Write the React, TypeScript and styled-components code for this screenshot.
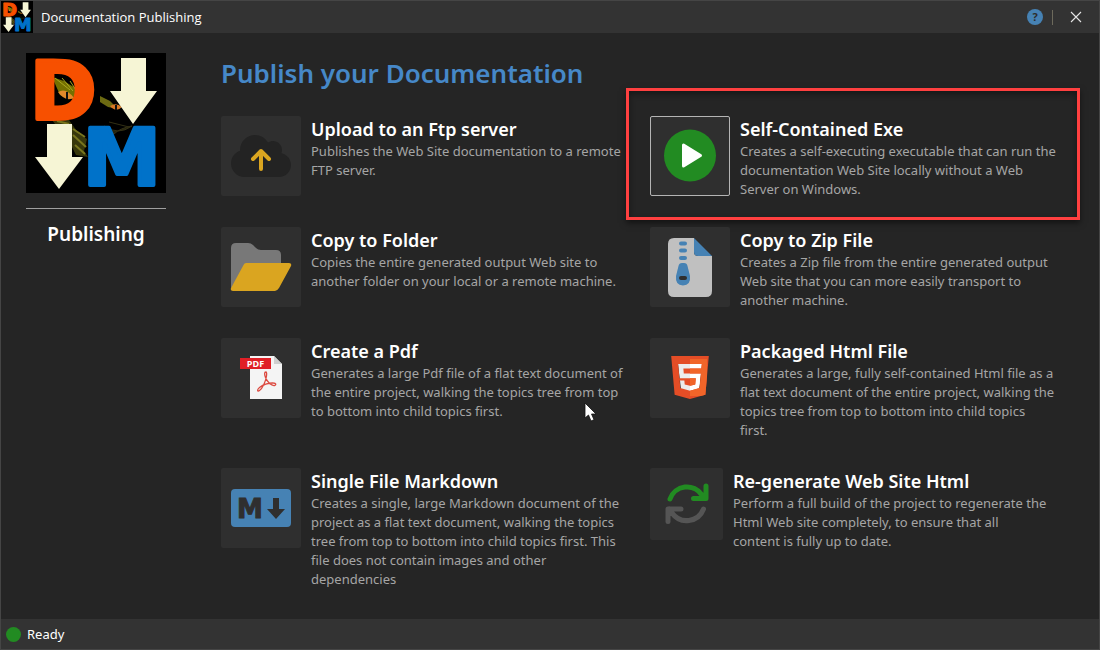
import React from "react";
import styled, { createGlobalStyle, css } from "styled-components";
import { SiHtml5 } from "react-icons/si";

const GlobalStyle = createGlobalStyle`
  * { box-sizing: border-box; }
  body {
    margin: 0;
    background: #252525;
    color: #fff;
    font-family: "Noto Sans", "Open Sans", sans-serif;
    font-size: 13px;
    line-height: 19px;
  }
`;

const Window = styled.div`
  display: flex;
  flex-direction: column;
  min-height: 100vh;
  border: 1px solid #454545;
  background: #252525;
`;

const TitleBar = styled.header`
  display: flex;
  align-items: center;
  height: 32px;
  padding-right: 17px;
  background: #333;
`;

const WindowTitle = styled.span`
  flex: 1;
  padding-left: 8px;
  font-family: "Open Sans", sans-serif;
`;

const BarButton = styled.button`
  display: flex;
  padding: 0;
  border: 0;
  background: none;
  color: #e6e6e6;
`;

const BarDivider = styled.span`
  width: 1px;
  height: 15px;
  margin: 0 17px 0 9px;
  background: #6d6a5c;
`;

const Body = styled.div`
  display: flex;
  flex: 1;
  gap: 55px;
  padding: 20px 36px 24px 25px;
`;

const Sidebar = styled.aside`
  flex: none;
  width: 140px;
`;

const SidebarTitle = styled.h2`
  margin: 15px 0 0;
  padding-top: 12px;
  border-top: 1px solid #a0a0a0;
  font-size: 19px;
  font-weight: 600;
  line-height: 26px;
  text-align: center;
`;

const Main = styled.main`
  flex: 1;
  min-width: 0;
`;

const PageTitle = styled.h1`
  margin: 0 0 23px;
  color: #4688c8;
  font-size: 26px;
  font-weight: 600;
  line-height: 40px;
`;

const Options = styled.div`
  display: grid;
  grid-template-columns: repeat(2, minmax(0, 1fr));
  gap: 28px 16px;
`;

const Card = styled.section<{ $highlighted?: boolean }>`
  position: relative;
  display: flex;
  align-items: flex-start;
  gap: 10px;
  ${(p) =>
    p.$highlighted &&
    css`
      &::after {
        content: "";
        position: absolute;
        inset: -28px -17px -21px -24px;
        border: 3px solid #ff4040;
        box-shadow: 0 3px 6px rgba(0, 0, 0, 0.5), inset 0 3px 6px rgba(0, 0, 0, 0.4);
        pointer-events: none;
      }
    `}
`;

const Tile = styled.button<{ $small?: boolean; $selected?: boolean }>`
  display: flex;
  flex: none;
  align-items: center;
  justify-content: center;
  width: ${(p) => (p.$small ? 73 : 80)}px;
  height: ${(p) => (p.$small ? 72 : 80)}px;
  padding: 0;
  border: 0;
  border-radius: 2px;
  outline: ${(p) => (p.$selected ? "1px solid #b4b4b4" : "none")};
  outline-offset: -1px;
  background: #2f2f2f;
`;

const CardTitle = styled.h3`
  margin: 0;
  font-size: 18px;
  font-weight: 600;
  line-height: 26px;
`;

const CardText = styled.p`
  margin: 0;
  color: #a5a5a5;
  white-space: pre-line;
`;

const Pointer = styled.svg`
  position: absolute;
  top: 64px;
  left: 363px;
`;

const StatusBar = styled.footer`
  display: flex;
  align-items: center;
  gap: 6px;
  height: 30px;
  padding-left: 5px;
  background: #333;
`;

const StatusDot = styled.span`
  width: 15px;
  height: 15px;
  border-radius: 50%;
  background: #228b22;
`;

const Logo = ({ size }: { size: number }) => (
  <svg width={size} height={size} viewBox="0 0 140 140" display="block" overflow="visible" aria-hidden="true">
    <rect width="140" height="140" fill="#000" />
    <path d="M26 24l12 4 8 5 10 5 8 12-6-2 3 9-9-8-8-4-10-3z" fill="#747000" />
    <path d="M29 25l15 12M36 25l11 13M44 28l8 12M51 31l7 15" stroke="#aaa820" strokeWidth="1" />
    <path d="M32 39q8-5 16 6q-9 4-16-6z" fill="#e2892b" />
    <path d="M41 39v7" stroke="#111" strokeWidth="2" />
    <path d="M74 43l10 5 8 8-10-2-8-5z" fill="#6c6a12" />
    <path d="M84 53q6-4 12 1q-6 6-12-1z" fill="#d87725" />
    <path d="M90 52v5" stroke="#111" strokeWidth="2" />
    <path d="M78 73q14 10 28 0q-12 2-18 8zM83 69l20 5" fill="#26250e" stroke="#333015" />
    <path d="M26 67h17l10 14 8 5-3 12 4 6-12-2-5-10z" fill="#37370b" />
    <path d="M31 68l12 3M47 76l12 8M47 82l13 12M49 92l10 9" stroke="#77751d" strokeWidth="2" />
    <g fontFamily="DejaVu Sans, sans-serif" fontWeight="700" strokeLinejoin="round" strokeWidth="4">
      <text x="4" y="66" fontSize="80" fill="#f75000" stroke="#f75000">D</text>
      <text x="57" y="132" fontSize="78" fill="#0072c9" stroke="#0072c9">M</text>
    </g>
    <path d="M95 5h25v33h11l-24 33-23-33h11z" fill="#f6f5d5" />
    <path d="M21 71h25v33h11l-24 32-24-32h12z" fill="#f6f5d5" />
  </svg>
);

const HelpIcon = () => (
  <svg width="16" height="16" viewBox="0 0 16 16" overflow="visible" aria-hidden="true">
    <circle cx="8" cy="8" r="8" fill="#4682b4" />
    <text x="8" y="12" textAnchor="middle" fontFamily="Open Sans, sans-serif" fontWeight="700" fontSize="11" fill="#2d2d2d">?</text>
  </svg>
);

const CloseIcon = () => (
  <svg width="12" height="12" viewBox="0 0 12 12" aria-hidden="true">
    <path d="M1 1l10 10M11 1L1 11" stroke="currentColor" strokeWidth="1.1" />
  </svg>
);

const Art = ({ children }: { children: React.ReactNode }) => (
  <svg width="80" height="80" viewBox="0 0 80 80" fill="none" aria-hidden="true">
    {children}
  </svg>
);

const CloudArt = () => (
  <Art>
    <path
      transform="translate(10 16) scale(.09375)"
      fill="#232323"
      d="M537.6 226.6c4.1-10.7 6.4-22.4 6.4-34.6 0-53-43-96-96-96-19.7 0-38.1 6-53.3 16.2C367 64.2 315.3 32 256 32c-88.4 0-160 71.6-160 160 0 2.7.1 5.4.2 8.1C40.2 219.8 0 273.2 0 336c0 79.5 64.5 144 144 144h368c70.7 0 128-57.3 128-128 0-61.9-44-113.6-102.4-125.4z"
    />
    <path d="M40 53V35M32 43l8-8 8 8" stroke="#daa520" strokeWidth="4" strokeLinecap="round" strokeLinejoin="round" />
  </Art>
);

const PlayArt = () => (
  <Art>
    <circle cx="40" cy="39.5" r="26" fill="#228b22" />
    <path d="M33.5 29v21l17-10.500z" fill="#fff" stroke="#fff" strokeWidth="3" strokeLinejoin="round" />
  </Art>
);

const FolderArt = () => (
  <Art>
    <path d="M10 62V21q0-5 5-5h12q3 0 5 2l3 3q2 2 5 2h15q5 0 5 5v9H24z" fill="#787878" />
    <path d="M25 36h43q3 0 2 3L58 61q-2 3-4 3H12q-3 0-2-3l12-22q1-3 3-3z" fill="#daa520" />
  </Art>
);

const ZipArt = () => (
  <Art>
    <path d="M24 11h20v14q0 4 4 4h14v35q0 6-6 6H24q-6 0-6-6V17q0-6 6-6z" fill="#c0c0c0" />
    <path d="M44 11l18 18H48q-4 0-4-4z" fill="#4682b4" />
    <path d="M31 16.500h4M31 23.500h4M31 31h4" stroke="#4682b4" strokeWidth="4" strokeLinecap="round" />
    <path d="M32 36h2q3 0 3.500 3l2.500 10q1 9-7 9.500-8-.5-7-9.500l2.500-10q.5-3 3.500-3z" fill="#4682b4" />
    <path d="M31 51h4" stroke="#2f2f2f" strokeWidth="4" strokeLinecap="round" />
  </Art>
);

const PdfArt = () => (
  <Art>
    <path d="M29 18h24l8 8v35H29z" fill="#f4f4f4" />
    <path d="M53 18v8h8z" fill="#cfcfcf" />
    <path d="M19 20h31v11H19z" fill="#e01f26" />
    <text x="34.500" y="29" textAnchor="middle" fontFamily="Open Sans, sans-serif" fontWeight="700" fontSize="9" fill="#fff">PDF</text>
    <path
      d="M45 34c-2 0-1.500 3-.5 5.500 2 5 6 8.500 9 8 2-.5 1.500-2.500-1-2.500-5-.2-10 1.500-14 4.500-3 2.500-2 4.500 0 3 3-2 6.500-10 7-14.500.2-2 .3-4-.5-4z"
      stroke="#dc4a40"
      strokeWidth="1.300"
    />
  </Art>
);

const HtmlArt = () => (
  <Art>
    <path d="M28 26h24l-3 25-9 3-9-3z" fill="#ececec" />
    <path d="M40 26h12l-3 25-9 3z" fill="#fff" />
    <SiHtml5 x="18.500" y="18" size={43} color="#e44d26" />
    <svg x="40" y="21" width="17" height="37" viewBox="40 21 17 37">
      <SiHtml5 x="18.500" y="18" size={43} color="#f16529" />
    </svg>
  </Art>
);

const MarkdownArt = () => (
  <Art>
    <rect x="10" y="21" width="60" height="38" rx="4" fill="#4682b4" />
    <text x="16" y="50" fontFamily="DejaVu Sans, sans-serif" fontWeight="700" fontSize="26" fill="#2f2f2f" stroke="#2f2f2f">M</text>
    <path d="M52 30h6v11h6l-9 10-9-10h6z" fill="#2f2f2f" />
  </Art>
);

const RefreshArt = () => (
  <svg width="73" height="72" viewBox="0 0 73 72" fill="none" strokeWidth="5" strokeLinecap="round" strokeLinejoin="round" aria-hidden="true">
    <path d="M20 31A18 18 0 0 1 52 27l3 3M56 18v12.500H43.500" stroke="#228b22" />
    <path d="M53.500 41A18 18 0 0 1 22 45l-3-4M31 41H18v12.500" stroke="#555" />
  </svg>
);

type Option = {
  id: string;
  title: string;
  text: string;
  art: React.ReactNode;
  selected?: boolean;
  small?: boolean;
  pointer?: boolean;
};

const options: Option[] = [
  { id: "ftp", title: "Upload to an Ftp server", art: <CloudArt />, text: "Publishes the Web Site documentation to a remote FTP server." },
  { id: "exe", title: "Self-Contained Exe", art: <PlayArt />, selected: true, text: "Creates a self-executing executable that can run the documentation Web Site locally without a Web Server on Windows." },
  { id: "folder", title: "Copy to Folder", art: <FolderArt />, text: "Copies the entire generated output Web site to another folder on your local or a remote machine." },
  { id: "zip", title: "Copy to Zip File", art: <ZipArt />, text: "Creates a Zip file from the entire generated output Web site that you can more easily transport to another machine." },
  { id: "pdf", title: "Create a Pdf", art: <PdfArt />, pointer: true, text: "Generates a large Pdf file of a flat text document of the entire project, walking the topics tree from top to bottom into child topics first." },
  { id: "html", title: "Packaged Html File", art: <HtmlArt />, text: "Generates a large, fully self-contained Html file as a flat text document of the entire project, walking the topics tree from top to bottom into child topics\nfirst." },
  { id: "markdown", title: "Single File Markdown", art: <MarkdownArt />, text: "Creates a single, large Markdown document of the project as a flat text document, walking the topics tree from top to bottom into child topics first. This file does not contain images and other dependencies" },
  { id: "rebuild", title: "Re-generate Web Site Html", art: <RefreshArt />, small: true, text: "Perform a full build of the project to regenerate the Html Web site completely, to ensure that all\ncontent is fully up to date." },
];

export default function App() {
  return (
    <>
      <GlobalStyle />
      <Window>
        <TitleBar>
          <Logo size={32} />
          <WindowTitle>Documentation Publishing</WindowTitle>
          <BarButton type="button" aria-label="Help"><HelpIcon /></BarButton>
          <BarDivider />
          <BarButton type="button" aria-label="Close"><CloseIcon /></BarButton>
        </TitleBar>
        <Body>
          <Sidebar>
            <Logo size={140} />
            <SidebarTitle>Publishing</SidebarTitle>
          </Sidebar>
          <Main>
            <PageTitle>Publish your Documentation</PageTitle>
            <Options>
              {options.map((o) => (
                <Card key={o.id} $highlighted={o.selected}>
                  <Tile type="button" aria-labelledby={o.id} $small={o.small} $selected={o.selected}>
                    {o.art}
                  </Tile>
                  <div>
                    <CardTitle id={o.id}>{o.title}</CardTitle>
                    <CardText>{o.text}</CardText>
                  </div>
                  {o.pointer && (
                    <Pointer width="13" height="20" viewBox="0 0 13 20" aria-hidden="true">
                      <path d="M1 1v15l3.500-3 2.500 6 3-1.300-2.500-5.700H12z" fill="#fff" stroke="#111" strokeWidth=".8" />
                    </Pointer>
                  )}
                </Card>
              ))}
            </Options>
          </Main>
        </Body>
        <StatusBar>
          <StatusDot />
          Ready
        </StatusBar>
      </Window>
    </>
  );
}
